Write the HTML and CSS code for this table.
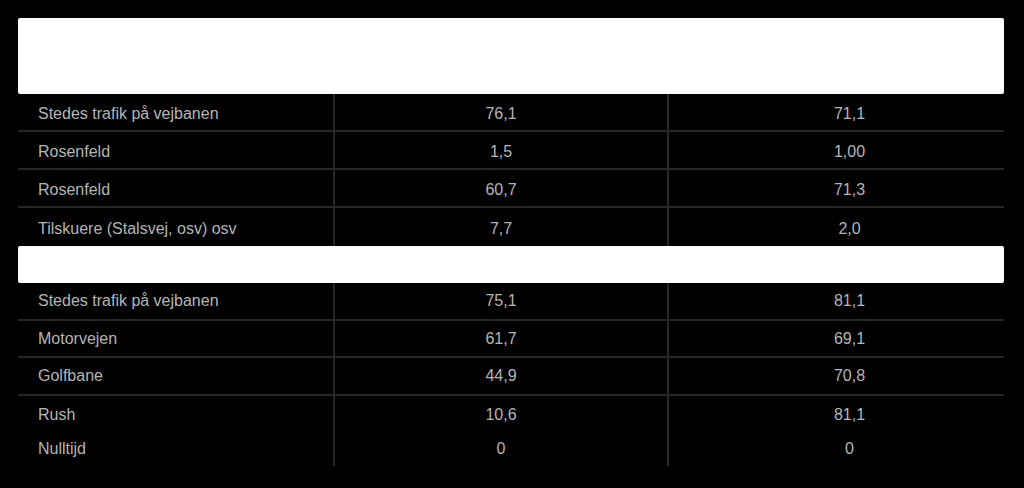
FILE: index.html
```html
<!DOCTYPE html>
<html lang="da">
<head>
<meta charset="utf-8">
<title>Tabel</title>
<link rel="stylesheet" href="styles.css">
</head>
<body>
<div class="page">
  <div class="table">
    <div class="head-bar"></div>
    <div class="row line"><div class="label">Stedes trafik på vejbanen</div><div class="val">76,1</div><div class="val v3">71,1</div></div>
    <div class="row line"><div class="label">Rosenfeld</div><div class="val">1,5</div><div class="val v3">1,00</div></div>
    <div class="row line"><div class="label">Rosenfeld</div><div class="val">60,7</div><div class="val v3">71,3</div></div>
    <div class="row"><div class="label">Tilskuere (Stalsvej, osv) osv</div><div class="val">7,7</div><div class="val v3">2,0</div></div>
    <div class="section-bar"></div>
    <div class="row line s2"><div class="label">Stedes trafik på vejbanen</div><div class="val">75,1</div><div class="val v3">81,1</div></div>
    <div class="row line s2"><div class="label">Motorvejen</div><div class="val">61,7</div><div class="val v3">69,1</div></div>
    <div class="row line s2"><div class="label">Golfbane</div><div class="val">44,9</div><div class="val v3">70,8</div></div>
    <div class="row s2"><div class="label">Rush</div><div class="val">10,6</div><div class="val v3">81,1</div></div>
    <div class="row last"><div class="label">Nulltijd</div><div class="val">0</div><div class="val v3">0</div></div>
  </div>
</div>
</body>
</html>
```
FILE: styles.css
```css
html, body {
  margin: 0;
  padding: 0;
  background: #000;
}
body {
  font-family: "Liberation Sans", Arial, sans-serif;
  color: #b5b5b5;
  font-size: 16px;
}
.page {
  padding: 18px 20px 0 18px;
}
.table {
  width: 986px;
  display: flex;
  flex-direction: column;
}
.head-bar {
  height: 76px;
  background: #fff;
  border-radius: 2px;
}
.section-bar {
  height: 37px;
  background: #fff;
  border-radius: 2px;
}
.row {
  display: grid;
  grid-template-columns: 315px 334px 337px;
  height: 38px;
  box-sizing: border-box;
}
.row.s2 {
  height: 37.5px;
}
.row.line {
  border-bottom: 2px solid #262626;
}
.row.last {
  height: 33px;
}
.label {
  padding: 3px 0 0 20px;
  display: flex;
  align-items: center;
}
.row.s2 .label, .row.s2 .val {
  padding-top: 1px;
}
.row.last .label, .row.last .val {
  padding-top: 0;
  align-items: flex-start;
  padding-top: 7px;
}
.val {
  padding-top: 3px;
  display: flex;
  align-items: center;
  justify-content: center;
  border-left: 2px solid #262626;
}
.val.v3 {
  padding-left: 26px;
}
```
